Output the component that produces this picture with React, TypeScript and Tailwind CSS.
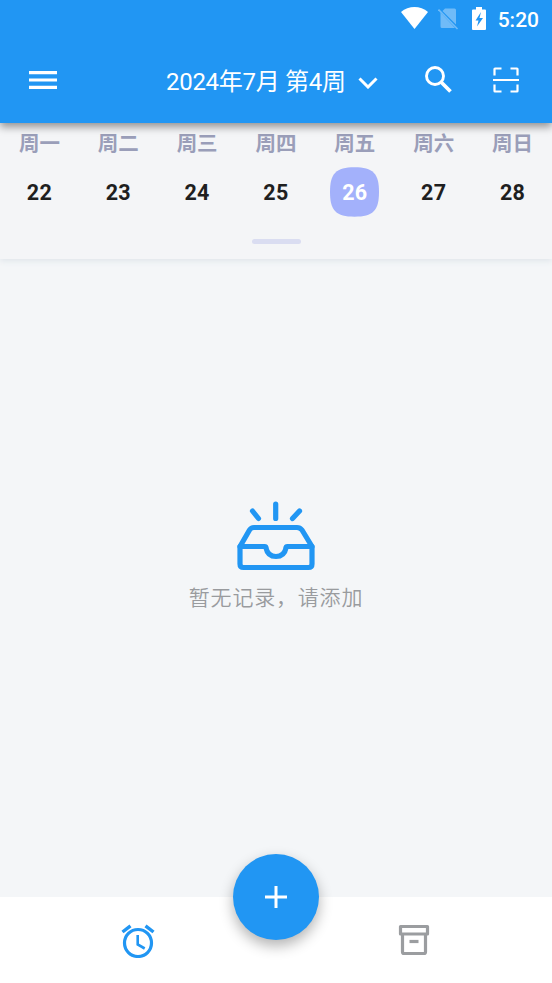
import clsx from "clsx";

interface Day {
    label: string;
    date: number;
}

const days: Day[] = [
    { label: "周一", date: 22 },
    { label: "周二", date: 23 },
    { label: "周三", date: 24 },
    { label: "周四", date: 25 },
    { label: "周五", date: 26 },
    { label: "周六", date: 27 },
    { label: "周日", date: 28 },
];

const selected = 26;

function StatusBar() {
    return (
        <div className="flex h-[38px] items-center justify-end pr-[13px]">
            <svg className="mr-[10px] h-[22px] w-[27px] -translate-y-px" viewBox="0 0 27 22" fill="#fff">
                <path d="M0 5C7.5-1.6 19.5-1.6 27 5L13.500 22Z" />
            </svg>
            <svg className="mr-[13px] h-[23px] w-[21px] -translate-y-px" viewBox="0 0 21 23" fill="none">
                <path d="M7 1.500H16.500q1.500 0 1.500 1.500V17.500L4.500 4ZM2.500 5.500V19.500Q2.500 21 4 21H17Z" fill="#70bbf8" />
                <path d="M.5 2.500L19.500 22" stroke="#70bbf8" strokeWidth="1.600" />
            </svg>
            <svg className="mr-[12px] h-[23px] w-[14px] -translate-y-px" viewBox="0 0 14 23">
                <path d="M4 0h6v2.500h3q1 0 1 1V22q0 1-1 1H1q-1 0-1-1V3.500q0-1 1-1h3Z" fill="#fff" />
                <path d="M9 5L3.500 13.500h3L5 19.500L11 11H7.500Z" fill="#2196f3" />
            </svg>
            <span className="translate-y-px text-[21px] leading-none font-medium text-white">5:20</span>
        </div>
    );
}

function AppBar() {
    return (
        <div className="flex h-[85px] items-center pb-[2px] pl-[29px]">
            <svg className="h-[18px] w-[28px]" viewBox="0 0 28 18" stroke="#fff" strokeWidth="3.200">
                <path d="M0 1.600H28M0 9H28M0 16.400H28" />
            </svg>
            <div className="ml-[109px] flex w-[212px] items-center pt-[5px]">
                <span className="text-[24px] leading-none tracking-[-0.300px] whitespace-nowrap text-white">2024年7月 第4周</span>
                <svg className="ml-auto h-[12px] w-[20px] translate-y-px" viewBox="0 0 20 12" fill="none" stroke="#fff" strokeWidth="3">
                    <path d="M1.500 1.500L10 10L18.500 1.500" />
                </svg>
            </div>
            <svg className="ml-[47px] h-[28px] w-[28px]" viewBox="0 0 28 28" fill="none" stroke="#fff">
                <circle cx="10" cy="10" r="8.500" strokeWidth="2.900" />
                <path d="M16 16L25.500 25.500" strokeWidth="3.700" />
            </svg>
            <svg className="ml-[40px] h-[26px] w-[26px]" viewBox="0 0 26 26" fill="none" stroke="#fff" strokeWidth="2.200">
                <path d="M0 13H26M1.500 8.500V2Q1.500 1.500 2 1.500H8.500M17.500 1.500H24Q24.500 1.500 24.500 2V8.500M1.500 17.500V24Q1.500 24.500 2 24.500H8.500M24.500 17.500V24Q24.500 24.500 24 24.500H17.500" />
            </svg>
        </div>
    );
}

function WeekPanel() {
    return (
        <section className="h-[136px] bg-[#f4f5f7] shadow-[0_2px_6px_#dfe5ea]">
            <div className="grid grid-cols-7">
                {days.map((day) => (
                    <div key={day.date} className="flex flex-col items-center pt-[9px]">
                        <span className="text-[20.500px] leading-[24px] font-bold text-[#9a9eb9]">{day.label}</span>
                        <div className="relative mt-[11px] flex h-[50px] w-[50px] items-center justify-center">
                            {day.date === selected && (
                                <svg className="absolute inset-0 -translate-x-[0.500px]" viewBox="0 0 50 50" fill="#a3b1fb">
                                    <path d="M25 .3C43.500.3 49.500 6.500 49.500 25S43.500 49.700 25 49.700S.5 43.500.5 25S6.500.3 25 .3Z" />
                                </svg>
                            )}
                            <span
                                className={clsx(
                                    "relative top-px text-[21.500px] leading-none font-bold tracking-[0.300px]",
                                    day.date === selected ? "text-white" : "text-[#1f1f1f]"
                                )}
                            >
                                {day.date}
                            </span>
                        </div>
                    </div>
                ))}
            </div>
            {/* Drag handle */}
            <div className="mx-auto mt-[22px] h-[5px] w-[49px] rounded-full bg-[#daddf1]" />
        </section>
    );
}

function EmptyState() {
    return (
        <main className="flex flex-1 flex-col items-center pt-[242px]">
            <svg
                className="h-[70px] w-[78px]"
                viewBox="0 0 78 70"
                fill="none"
                stroke="#2196f3"
                strokeWidth="5.200"
                strokeLinecap="round"
                strokeLinejoin="round"
            >
                <path d="M38.700 3V17.500M15.500 10L21.500 17.500M62.500 10L55.500 17.500" />
                <path d="M3 45.500L12.500 29Q14 26.500 17 26.500H60Q63 26.500 65 29L75 45.500V63Q75 66.500 71.500 66.500H6.500Q3 66.500 3 63Z" />
                <path d="M3 45.500H27.500Q29 45.500 29 47C30 52 33 55.500 39 55.500S48 52 49 47Q49 45.500 50.500 45.500H75" />
            </svg>
            <p className="mt-[14px] text-[21px] leading-[26px] font-[350] tracking-[0.800px] text-[#999b9e]">暂无记录，请添加</p>
        </main>
    );
}

function BottomBar() {
    return (
        <nav className="relative flex h-[86px] bg-white">
            <button className="flex flex-1 justify-center pt-[27px]">
                <svg className="h-[34px] w-[34px]" viewBox="0 0 34 34" fill="none" stroke="#2196f3" strokeWidth="3.200">
                    <circle cx="17" cy="19" r="13.500" />
                    <path d="M1.500 8L9.500 1.800M32.500 8L24.500 1.800" strokeWidth="3.400" />
                    <path d="M16.700 11V20.500L23.700 24.500" strokeWidth="2.600" />
                </svg>
            </button>
            <button className="flex flex-1 justify-center pt-[27px]">
                <svg className="h-[32px] w-[32px]" viewBox="0 0 32 32" fill="none" stroke="#9b9da0" strokeWidth="3.200" strokeLinejoin="round">
                    <path d="M2.500 2.500H29.500V10H2.500ZM4.500 10V28Q4.500 29.500 6 29.500H26Q27.500 29.500 27.500 28V10" />
                    <path d="M11.500 17.500H20.500" />
                </svg>
            </button>
            <button className="absolute -top-[43px] left-1/2 flex h-[86px] w-[86px] -translate-x-1/2 items-center justify-center rounded-full bg-[#2196f3] shadow-[0_6px_14px_rgba(0,0,0,0.3)]">
                <svg className="h-[22px] w-[22px]" viewBox="0 0 22 22" stroke="#fff" strokeWidth="3">
                    <path d="M11 0V22M0 11H22" />
                </svg>
            </button>
        </nav>
    );
}

export default function App() {
    return (
        <div className="flex h-[983px] w-[552px] flex-col overflow-hidden bg-[#f4f6f8] font-[Roboto,'Noto_Sans_CJK_SC',sans-serif]">
            <header className="relative z-10 h-[123px] bg-[#2196f3] shadow-[0_4px_8px_rgba(0,0,0,0.4)]">
                <StatusBar />
                <AppBar />
            </header>
            <WeekPanel />
            <EmptyState />
            <BottomBar />
        </div>
    );
}
